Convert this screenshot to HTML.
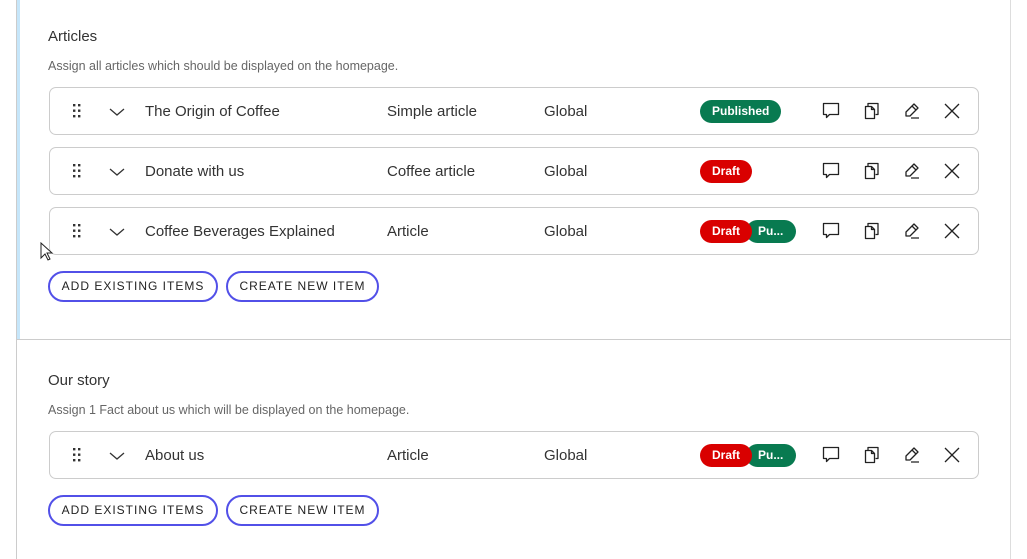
<!DOCTYPE html>
<html><head><style>
*{box-sizing:border-box;margin:0;padding:0}
body{width:1027px;height:559px;background:#fff;font-family:"Liberation Sans",sans-serif;position:relative;overflow:hidden;color:#333}
.vl{position:absolute;left:16px;top:0;width:1px;height:559px;background:#ccc}
.blue{position:absolute;left:17px;top:0;width:3px;height:339px;background:#c6e6fa}
.vr{position:absolute;left:1010px;top:0;width:1px;height:559px;background:#ddd}
.hl{position:absolute;left:16px;top:339px;width:995px;height:1px;background:#ccc}
.h{position:absolute;left:48px;font-size:15px;color:#333}
.d{position:absolute;left:48px;font-size:12.5px;color:#666}
.row{position:absolute;left:49px;width:930px;height:48px;border:1px solid #ccc;border-radius:7px}
.row span{position:absolute;top:15px;font-size:15px;color:#333}
.grip{position:absolute;left:23px;top:16px;width:8px;height:14px}
.chev{position:absolute;left:59px;top:19px}
.badge{position:absolute;top:12px;height:23px;border-radius:12px;color:#fff;font-size:12px;font-weight:bold;line-height:23px;padding:0 12px}
.pub{background:#087a50}.dr{background:#d90000}
.ic{position:absolute;top:14px}
.btn{position:absolute;height:31px;border:2px solid #5250e8;border-radius:16px;font-size:12px;letter-spacing:1px;color:#222;line-height:27px;text-align:center}
</style></head><body>
<div class="vl"></div><div class="blue"></div><div class="vr"></div><div class="hl"></div>
<div class="h" style="top:28px">Articles</div>
<div class="d" style="top:59px">Assign all articles which should be displayed on the homepage.</div>
<div class="h" style="top:372px">Our story</div>
<div class="d" style="top:403px">Assign 1 Fact about us which will be displayed on the homepage.</div>

<div class="row" style="top:87px">
<svg class="grip" viewBox="0 0 8 14"><g fill="#333"><rect x="0" y="0" width="2.4" height="2.4"/><rect x="5" y="0" width="2.4" height="2.4"/><rect x="0" y="5.5" width="2.4" height="2.4"/><rect x="5" y="5.5" width="2.4" height="2.4"/><rect x="0" y="11" width="2.4" height="2.4"/><rect x="5" y="11" width="2.4" height="2.4"/></g></svg>
<svg class="chev" width="16" height="10" viewBox="0 0 16 10"><path d="M1 2l7 6 7-6" fill="none" stroke="#333" stroke-width="1.3"/></svg>
<span style="left:95px">The Origin of Coffee</span><span style="left:337px">Simple article</span><span style="left:494px">Global</span>
<div class="badge pub" style="left:650px">Published</div>
<svg class="ic" style="left:772px" width="18" height="18" viewBox="0 0 18 18"><path d="M1.5 1.5h15v11h-9l-3 3v-3h-3z" fill="none" stroke="#222" stroke-width="1.3" stroke-linejoin="round"/></svg>
<svg class="ic" style="left:814px" width="16" height="18" viewBox="0 0 16 18"><path d="M4 4V1.5h10v11h-2.5M1.5 4.5h6l3 3v9h-9z M7.5 4.5v3h3" fill="none" stroke="#222" stroke-width="1.3" stroke-linejoin="round"/></svg>
<svg class="ic" style="left:853px" width="18" height="18" viewBox="0 0 18 18"><path d="M11 2l4 4-8 8H3v-4zM9 4l4 4M8 16h8" fill="none" stroke="#222" stroke-width="1.3" stroke-linejoin="round"/></svg>
<svg class="ic" style="left:894px" width="16" height="18" viewBox="0 0 16 18"><path d="M1 2l14 14M15 2L1 16" stroke="#222" stroke-width="1.3"/></svg>
</div>

<div class="row" style="top:147px">
<svg class="grip" viewBox="0 0 8 14"><g fill="#333"><rect x="0" y="0" width="2.4" height="2.4"/><rect x="5" y="0" width="2.4" height="2.4"/><rect x="0" y="5.5" width="2.4" height="2.4"/><rect x="5" y="5.5" width="2.4" height="2.4"/><rect x="0" y="11" width="2.4" height="2.4"/><rect x="5" y="11" width="2.4" height="2.4"/></g></svg>
<svg class="chev" width="16" height="10" viewBox="0 0 16 10"><path d="M1 2l7 6 7-6" fill="none" stroke="#333" stroke-width="1.3"/></svg>
<span style="left:95px">Donate with us</span><span style="left:337px">Coffee article</span><span style="left:494px">Global</span>
<div class="badge dr" style="left:650px">Draft</div>
<svg class="ic" style="left:772px" width="18" height="18" viewBox="0 0 18 18"><path d="M1.5 1.5h15v11h-9l-3 3v-3h-3z" fill="none" stroke="#222" stroke-width="1.3" stroke-linejoin="round"/></svg>
<svg class="ic" style="left:814px" width="16" height="18" viewBox="0 0 16 18"><path d="M4 4V1.5h10v11h-2.5M1.5 4.5h6l3 3v9h-9z M7.5 4.5v3h3" fill="none" stroke="#222" stroke-width="1.3" stroke-linejoin="round"/></svg>
<svg class="ic" style="left:853px" width="18" height="18" viewBox="0 0 18 18"><path d="M11 2l4 4-8 8H3v-4zM9 4l4 4M8 16h8" fill="none" stroke="#222" stroke-width="1.3" stroke-linejoin="round"/></svg>
<svg class="ic" style="left:894px" width="16" height="18" viewBox="0 0 16 18"><path d="M1 2l14 14M15 2L1 16" stroke="#222" stroke-width="1.3"/></svg>
</div>

<div class="row" style="top:207px">
<svg class="grip" viewBox="0 0 8 14"><g fill="#333"><rect x="0" y="0" width="2.4" height="2.4"/><rect x="5" y="0" width="2.4" height="2.4"/><rect x="0" y="5.5" width="2.4" height="2.4"/><rect x="5" y="5.5" width="2.4" height="2.4"/><rect x="0" y="11" width="2.4" height="2.4"/><rect x="5" y="11" width="2.4" height="2.4"/></g></svg>
<svg class="chev" width="16" height="10" viewBox="0 0 16 10"><path d="M1 2l7 6 7-6" fill="none" stroke="#333" stroke-width="1.3"/></svg>
<span style="left:95px">Coffee Beverages Explained</span><span style="left:337px">Article</span><span style="left:494px">Global</span>
<div class="badge pub" style="left:696px;width:50px;padding-left:12px">Pu...</div>
<div class="badge dr" style="left:650px">Draft</div>
<svg class="ic" style="left:772px" width="18" height="18" viewBox="0 0 18 18"><path d="M1.5 1.5h15v11h-9l-3 3v-3h-3z" fill="none" stroke="#222" stroke-width="1.3" stroke-linejoin="round"/></svg>
<svg class="ic" style="left:814px" width="16" height="18" viewBox="0 0 16 18"><path d="M4 4V1.5h10v11h-2.5M1.5 4.5h6l3 3v9h-9z M7.5 4.5v3h3" fill="none" stroke="#222" stroke-width="1.3" stroke-linejoin="round"/></svg>
<svg class="ic" style="left:853px" width="18" height="18" viewBox="0 0 18 18"><path d="M11 2l4 4-8 8H3v-4zM9 4l4 4M8 16h8" fill="none" stroke="#222" stroke-width="1.3" stroke-linejoin="round"/></svg>
<svg class="ic" style="left:894px" width="16" height="18" viewBox="0 0 16 18"><path d="M1 2l14 14M15 2L1 16" stroke="#222" stroke-width="1.3"/></svg>
</div>

<div class="btn" style="left:48px;top:271px;width:170px">ADD EXISTING ITEMS</div>
<div class="btn" style="left:226px;top:271px;width:153px">CREATE NEW ITEM</div>

<div class="row" style="top:431px">
<svg class="grip" viewBox="0 0 8 14"><g fill="#333"><rect x="0" y="0" width="2.4" height="2.4"/><rect x="5" y="0" width="2.4" height="2.4"/><rect x="0" y="5.5" width="2.4" height="2.4"/><rect x="5" y="5.5" width="2.4" height="2.4"/><rect x="0" y="11" width="2.4" height="2.4"/><rect x="5" y="11" width="2.4" height="2.4"/></g></svg>
<svg class="chev" width="16" height="10" viewBox="0 0 16 10"><path d="M1 2l7 6 7-6" fill="none" stroke="#333" stroke-width="1.3"/></svg>
<span style="left:95px">About us</span><span style="left:337px">Article</span><span style="left:494px">Global</span>
<div class="badge pub" style="left:696px;width:50px;padding-left:12px">Pu...</div>
<div class="badge dr" style="left:650px">Draft</div>
<svg class="ic" style="left:772px" width="18" height="18" viewBox="0 0 18 18"><path d="M1.5 1.5h15v11h-9l-3 3v-3h-3z" fill="none" stroke="#222" stroke-width="1.3" stroke-linejoin="round"/></svg>
<svg class="ic" style="left:814px" width="16" height="18" viewBox="0 0 16 18"><path d="M4 4V1.5h10v11h-2.5M1.5 4.5h6l3 3v9h-9z M7.5 4.5v3h3" fill="none" stroke="#222" stroke-width="1.3" stroke-linejoin="round"/></svg>
<svg class="ic" style="left:853px" width="18" height="18" viewBox="0 0 18 18"><path d="M11 2l4 4-8 8H3v-4zM9 4l4 4M8 16h8" fill="none" stroke="#222" stroke-width="1.3" stroke-linejoin="round"/></svg>
<svg class="ic" style="left:894px" width="16" height="18" viewBox="0 0 16 18"><path d="M1 2l14 14M15 2L1 16" stroke="#222" stroke-width="1.3"/></svg>
</div>

<div class="btn" style="left:48px;top:495px;width:170px">ADD EXISTING ITEMS</div>
<div class="btn" style="left:226px;top:495px;width:153px">CREATE NEW ITEM</div>

<svg style="position:absolute;left:40px;top:242px" width="14" height="20" viewBox="0 0 14 20"><path d="M1 1v15l4-4 3 6 2-1-3-6h5z" fill="#fff" stroke="#222" stroke-width="1"/></svg>
</body></html>
